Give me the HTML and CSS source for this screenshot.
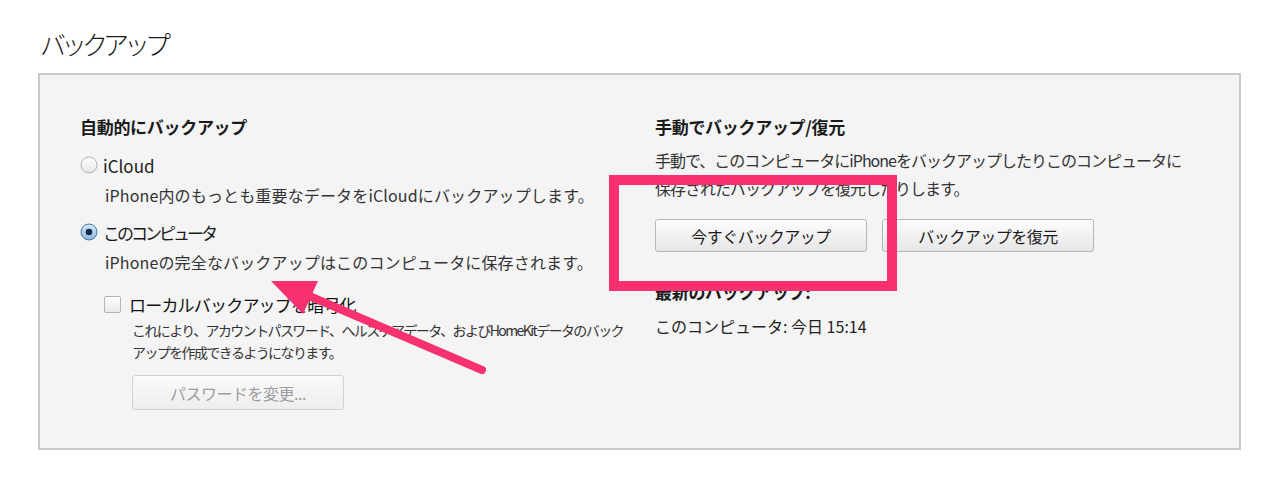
FILE: index.html
```html
<!DOCTYPE html>
<html lang="ja">
  <head>
    <meta charset="UTF-8" />
    <meta name="viewport" content="width=device-width, initial-scale=1.0" />
    <title>バックアップ</title>
    <link rel="stylesheet" href="styles.css">
  </head>
  <body>
    <div class="page">
      <h1 class="page-title">バックアップ</h1>
      <div class="panel">
        <div class="col">
          <h3 class="section-title">自動的にバックアップ</h3>
          <div class="option">
            <svg class="radio" viewBox="0 0 18 18" width="18" height="18">
              <defs>
                <linearGradient id="radio-off" x1="0" y1="0" x2="0" y2="1">
                  <stop offset="0" stop-color="#ffffff" />
                  <stop offset="1" stop-color="#e4e4e4" />
                </linearGradient>
              </defs>
              <circle cx="9" cy="9" r="8" fill="url(#radio-off)" stroke="#b3b3b3" stroke-width="1" />
            </svg>
            <span>iCloud</span>
          </div>
          <p class="option-desc">iPhone内のもっとも重要なデータをiCloudにバックアップします。</p>
          <div class="option second">
            <svg class="radio" viewBox="0 0 18 18" width="18" height="18">
              <defs>
                <linearGradient id="radio-on" x1="0" y1="0" x2="0" y2="1">
                  <stop offset="0" stop-color="#dbeaf8" />
                  <stop offset="1" stop-color="#8db6e0" />
                </linearGradient>
              </defs>
              <circle cx="9" cy="9" r="8" fill="url(#radio-on)" stroke="#4a7aab" stroke-width="1" />
              <circle cx="9" cy="9" r="3.3" fill="#13294b" />
            </svg>
            <span class="kana-label">このコンピュータ</span>
          </div>
          <p class="option-desc">iPhoneの完全なバックアップはこのコンピュータに保存されます。</p>
          <div class="sub">
            <div class="check-row">
              <span class="checkbox"></span>
              <span>ローカルバックアップを暗号化</span>
            </div>
            <p class="small">これにより、アカウントパスワード、ヘルスケアデータ、およびHomeKitデータのバックアップを作成できるようになります。</p>
            <button class="btn disabled">パスワードを変更...</button>
          </div>
        </div>
        <div class="col">
          <h3 class="section-title">手動でバックアップ/復元</h3>
          <p class="manual-desc">手動で、このコンピュータにiPhoneをバックアップしたりこのコンピュータに保存されたバックアップを復元したりします。</p>
          <div class="btn-row">
            <button class="btn">今すぐバックアップ</button>
            <button class="btn">バックアップを復元</button>
          </div>
          <h3 class="section-title latest">最新のバックアップ:</h3>
          <p class="latest-value">このコンピュータ: 今日 15:14</p>
        </div>
      </div>

      <!-- annotation drawn over the screenshot -->
      <svg class="marks" viewBox="0 0 1280 481" width="1280" height="481">
        <rect x="614" y="180" width="278" height="106" fill="none" stroke="#f7316f" stroke-width="10" />
        <line x1="482" y1="370" x2="300" y2="292" stroke="#f7316f" stroke-width="8" stroke-linecap="round" />
        <polygon points="271,281 318,281 303,314" fill="#f7316f" />
      </svg>
    </div>
  </body>
</html>
```

FILE: styles.css
```css
body {
  margin: 0;
  padding: 0;
  background: #ffffff;
  font-family: "Noto Sans CJK JP", "Noto Sans", sans-serif;
  color: #222;
}
.page {
  position: relative;
  width: 1280px;
  height: 481px;
  padding: 26px 0 0 38px;
  box-sizing: border-box;
}
.page-title {
  margin: 0 0 11px 2px;
  font-size: 26px;
  font-weight: 300;
  line-height: 36px;
  letter-spacing: -5px;
  color: #1c1c1c;
}
.panel {
  width: 1203px;
  height: 377px;
  box-sizing: border-box;
  border: 2px solid #c9c9c9;
  background: #f4f4f4;
  padding: 41px 0 0 40px;
  display: grid;
  grid-template-columns: 545px 1fr;
  column-gap: 30px;
}
.col {
  display: flex;
  flex-direction: column;
  align-items: flex-start;
}
.section-title {
  margin: 0;
  font-size: 17px;
  font-weight: bold;
  line-height: 22px;
  letter-spacing: -0.3px;
  color: #1a1a1a;
}
.option {
  display: flex;
  align-items: center;
  gap: 5px;
  height: 24px;
  margin-top: 15px;
  font-size: 17px;
  color: #1a1a1a;
}
.option.second {
  margin-top: 13px;
}
.kana-label {
  letter-spacing: -3px;
}
.radio {
  flex: none;
}
.option-desc {
  margin: 6px 0 0 25px;
  font-size: 16px;
  line-height: 24px;
  letter-spacing: 0.15px;
  color: #333;
}
.sub {
  margin: 18px 0 0 24px;
  display: flex;
  flex-direction: column;
  align-items: flex-start;
}
.check-row {
  display: flex;
  align-items: center;
  gap: 8px;
  height: 24px;
  font-size: 17px;
  letter-spacing: -0.8px;
  color: #111;
}
.checkbox {
  width: 15px;
  height: 15px;
  border: 1px solid #b4b4b4;
  border-radius: 2px;
  background: linear-gradient(#ffffff, #e9e9e9);
}
.small {
  margin: 3px 0 0 28px;
  width: 495px;
  font-size: 14px;
  line-height: 22px;
  letter-spacing: -1.6px;
  color: #333;
}
.btn {
  width: 212px;
  height: 33px;
  border: 1px solid #b5b5b5;
  border-radius: 3px;
  background: linear-gradient(#fdfdfd, #e6e6e6);
  font-family: inherit;
  font-size: 16px;
  color: #1a1a1a;
  letter-spacing: -0.5px;
  padding: 0;
}
.btn.disabled {
  margin: 12px 0 0 28px;
  height: 35px;
  border-color: #d2d2d2;
  background: linear-gradient(#fafafa, #eeeeee);
  color: #9c9c9c;
}
.manual-desc {
  margin: 8px 0 0;
  width: 532px;
  font-size: 16px;
  line-height: 28px;
  letter-spacing: -1px;
  color: #333;
}
.btn-row {
  display: flex;
  gap: 15px;
  margin-top: 17px;
}
.latest {
  margin-top: 29px;
}
.latest-value {
  margin: 11px 0 0;
  font-size: 16px;
  line-height: 24px;
  color: #222;
}
.marks {
  position: absolute;
  left: 0;
  top: 0;
  pointer-events: none;
}
```
